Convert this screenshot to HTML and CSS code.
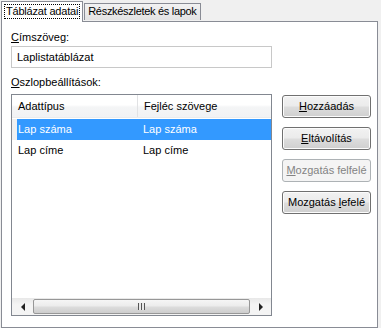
FILE: index.html
```html
<!DOCTYPE html>
<html lang="hu">
  <head>
    <meta charset="UTF-8" />
    <title>Táblázat adatai</title>
    <link rel="stylesheet" href="styles.css">
  </head>
  <body>
    <div class="tabs">
      <div class="tab active"><span class="focus">Táblázat adatai</span></div>
      <div class="tab">Részkészletek és lapok</div>
    </div>
    <div class="panel">
      <div class="left">
        <div class="label"><u>C</u>ímszöveg:</div>
        <div class="textbox">Laplistatáblázat</div>
        <div class="label second"><u>O</u>szlopbeállítások:</div>
        <div class="list">
          <div class="head">
            <div class="col c1">Adattípus</div>
            <div class="col c2">Fejléc szövege</div>
          </div>
          <div class="row selected">
            <div class="col c1">Lap száma</div>
            <div class="col c2">Lap száma</div>
          </div>
          <div class="row">
            <div class="col c1">Lap címe</div>
            <div class="col c2">Lap címe</div>
          </div>
          <div class="spacer"></div>
          <div class="hscroll">
            <div class="arrow"><span class="tri left-tri"></span></div>
            <div class="thumb"><span class="grip"></span></div>
            <div class="arrow"><span class="tri right-tri"></span></div>
          </div>
        </div>
      </div>
      <div class="buttons">
        <div class="btn"><u>H</u>ozzáadás</div>
        <div class="btn"><u>E</u>ltávolítás</div>
        <div class="btn disabled"><u>M</u>ozgatás felfelé</div>
        <div class="btn">Mozgatás <u>l</u>efelé</div>
      </div>
    </div>
  </body>
</html>
```

FILE: styles.css
```css
* {
  margin: 0;
  padding: 0;
  box-sizing: border-box;
}
body {
  width: 381px;
  height: 328px;
  background-color: #f0f0f0;
  font-family: "Liberation Sans", Arial, sans-serif;
  font-size: 11px;
  color: #000;
  overflow: hidden;
}
u {
  text-decoration: underline;
  text-underline-offset: 1px;
}
.tabs {
  display: flex;
  align-items: flex-end;
  height: 21px;
  padding-left: 1px;
  position: relative;
  z-index: 1;
}
.tab {
  height: 17px;
  padding: 0 3px;
  line-height: 15px;
  border: 1px solid #898c95;
  border-bottom: none;
  background: linear-gradient(#f2f2f2, #e3e3e3);
  margin-bottom: 1px;
  font-size: 11px;
  letter-spacing: -0.3px;
}
.tab.active {
  height: 21px;
  margin-bottom: -1px;
  padding: 2px 2px 0;
  background: #fff;
  margin-right: 1px;
  letter-spacing: -0.2px;
}
.focus {
  display: block;
  border: 1px dotted #000;
  line-height: 13px;
  padding: 0 1px;
}
.panel {
  display: flex;
  margin-left: 1px;
  width: 377px;
  height: 307px;
  border: 1px solid #898c95;
  background: #fff;
  padding: 9px 6px 11px 9px;
}
.left {
  display: flex;
  flex-direction: column;
  width: 263px;
}
.label {
  line-height: 13px;
  height: 13px;
  margin-bottom: 2px;
}
.label.second {
  margin-top: 8px;
  margin-bottom: 5px;
}
.textbox {
  height: 22px;
  border: 1px solid #c8c8c8;
  line-height: 20px;
  padding-left: 5px;
}
.list {
  flex: 1;
  display: flex;
  flex-direction: column;
  border: 1px solid #828790;
}
.head {
  display: flex;
  height: 23px;
  line-height: 22px;
  background: linear-gradient(#fff, #fff 45%, #f4f5f6 55%, #f1f2f4);
  border-bottom: 1px solid #eaebec;
}
.head .c1 {
  border-right: 1px solid #e1e2e4;
}
.col.c1 {
  width: 126px;
  padding-left: 6px;
}
.col.c2 {
  padding-left: 6px;
}
.row {
  display: flex;
  height: 21px;
  line-height: 21px;
  margin-left: 5px;
}
.row.selected {
  background: #3399ff;
  color: #fff;
  margin-top: 1px;
  box-shadow: -5px 0 0 #f0f0f0;
}
.row .c1 {
  width: 125px;
  padding-left: 1px;
}
.row .c2 {
  padding-left: 1px;
}
.spacer {
  flex: 1;
}
.hscroll {
  display: flex;
  height: 17px;
  background: linear-gradient(#e8e8e8, #f4f4f4 40%, #f4f4f4);
  padding: 1px 1px 0;
}
.arrow {
  width: 19px;
  display: flex;
  align-items: center;
  justify-content: center;
}
.tri {
  width: 0;
  height: 0;
  border-top: 4px solid transparent;
  border-bottom: 4px solid transparent;
}
.left-tri {
  border-right: 4px solid #222;
}
.right-tri {
  border-left: 4px solid #222;
}
.thumb {
  flex: 1;
  height: 15px;
  border: 1px solid #979797;
  border-radius: 2px;
  background: linear-gradient(#f6f6f6, #ececec 45%, #dcdcdc 55%, #cdcdcd);
  display: flex;
  align-items: center;
  justify-content: center;
  margin: 0 1px;
}
.grip {
  width: 7px;
  height: 7px;
  background: repeating-linear-gradient(90deg, #555 0 1px, #e8e8e8 1px 3px);
}
.buttons {
  display: flex;
  flex-direction: column;
  gap: 9px;
  margin-left: 10px;
  margin-top: 64px;
}
.btn {
  width: 89px;
  height: 23px;
  border: 1px solid #707070;
  border-radius: 3px;
  background: linear-gradient(#f2f2f2, #ebebeb 48%, #dddddd 52%, #cfcfcf);
  box-shadow: inset 0 0 0 1px #fcfcfc;
  text-align: center;
  line-height: 21px;
}
.btn.disabled {
  border-color: #adb2b5;
  background: #f4f4f4;
  box-shadow: none;
  color: #838383;
}
```
